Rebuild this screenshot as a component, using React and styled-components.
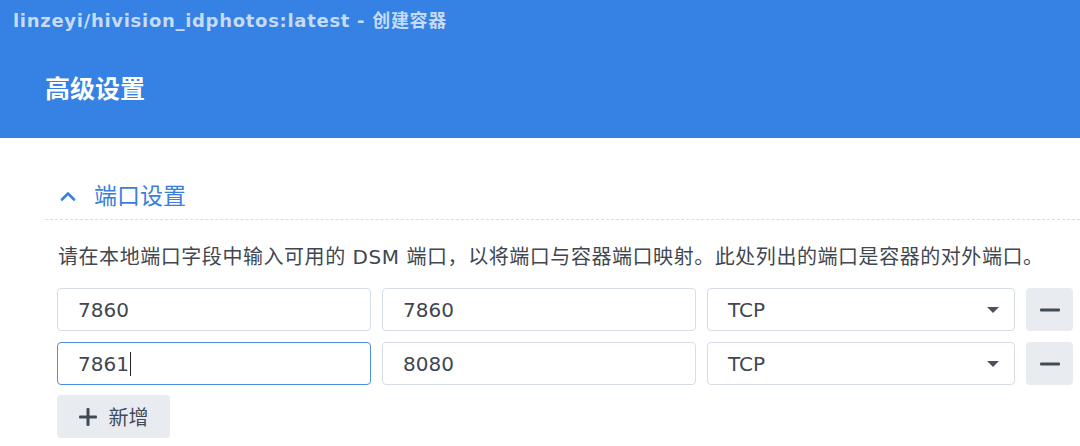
import React from 'react'
import styled, { createGlobalStyle } from 'styled-components'

const GlobalStyle = createGlobalStyle`
  body {
    margin: 0;
    background: #fff;
    font-family: "DejaVu Sans", "Noto Sans CJK SC", sans-serif;
  }
`

const Page = styled.div`
  width: 1080px;
  height: 446px;
  overflow: hidden;
  background: #fff;
`

const Header = styled.div`
  height: 138px;
  background: #3581e4;
  box-sizing: border-box;
  padding: 9px 0 0 13px;
`

const WindowTitle = styled.div`
  font-size: 18px;
  font-weight: 700;
  line-height: 24px;
  color: rgba(255, 255, 255, 0.72);
  letter-spacing: 0.7px;
`

const PageTitle = styled.h1`
  margin: 41px 0 0 32px;
  font-size: 25px;
  font-weight: 700;
  line-height: 32px;
  color: #fff;
`

const Content = styled.div`
  padding: 0 8px 0 45px;
`

const SectionHead = styled.div`
  display: flex;
  align-items: center;
  gap: 18px;
  height: 82px;
  box-sizing: border-box;
  padding: 35px 0 0 15px;
  margin-right: -8px;
  border-bottom: 1px dashed #d3deec;
  color: #3a7fe0;
  font-size: 23px;
  line-height: 30px;
`

const Body = styled.div`
  padding-left: 12px;
`

const Hint = styled.p`
  margin: 23px 0 0 1px;
  font-size: 20px;
  line-height: 28px;
  color: #3f4750;
  letter-spacing: 0.55px;
`

const Rows = styled.div`
  display: flex;
  flex-direction: column;
  gap: 11px;
  margin-top: 17px;
`

const Row = styled.div`
  display: grid;
  grid-template-columns: 314px 314px 308px 47px;
  column-gap: 11px;
  height: 43px;
`

const Field = styled.div`
  display: flex;
  align-items: center;
  box-sizing: border-box;
  padding: 0 20px;
  border: ${(p) => (p.$focused ? '1.5px solid #4a8ee6' : '1px solid #d6dde8')};
  border-radius: 4px;
  background: #fff;
  font-size: 20px;
  color: #3f4750;
`

const Caret = styled.span`
  display: inline-block;
  width: 1px;
  height: 24px;
  margin-left: 1px;
  background: #222;
`

const Select = styled(Field)`
  justify-content: space-between;
  padding-right: 15px;
`

const Arrow = styled.span`
  width: 0;
  height: 0;
  border-left: 6px solid transparent;
  border-right: 6px solid transparent;
  border-top: 6px solid #4a535d;
`

const IconButton = styled.button`
  display: flex;
  align-items: center;
  justify-content: center;
  gap: 12px;
  border: none;
  border-radius: 4px;
  background: #e8ecf1;
  color: #414b55;
  font-family: inherit;
  font-size: 20px;
  padding: 0;
`

const AddButton = styled(IconButton)`
  width: 113px;
  height: 43px;
  margin-top: 10px;
`

const ports = [
  { local: '7860', container: '7860' },
  { local: '7861', container: '8080', focused: true },
]

function Chevron() {
  return (
    <svg width="16" height="10" viewBox="0 0 16 10">
      <path d="M2 8.5 L8 2.5 L14 8.5" fill="none" stroke="#3a7fe0" strokeWidth="2.6" strokeLinecap="round" strokeLinejoin="round" />
    </svg>
  )
}

function Minus() {
  return (
    <svg width="20" height="4" viewBox="0 0 20 4">
      <rect x="0" y="0.5" width="20" height="3" rx="1" fill="#414b55" />
    </svg>
  )
}

function Plus() {
  return (
    <svg width="18" height="18" viewBox="0 0 18 18">
      <rect x="0" y="7.5" width="18" height="3" rx="1" fill="#414b55" />
      <rect x="7.5" y="0" width="3" height="18" rx="1" fill="#414b55" />
    </svg>
  )
}

export default function App() {
  return (
    <Page>
      <GlobalStyle />
      <Header>
        <WindowTitle>linzeyi/hivision_idphotos:latest - 创建容器</WindowTitle>
        <PageTitle>高级设置</PageTitle>
      </Header>
      <Content>
        <SectionHead>
          <Chevron />
          <span>端口设置</span>
        </SectionHead>
        <Body>
          <Hint>请在本地端口字段中输入可用的 DSM 端口，以将端口与容器端口映射。此处列出的端口是容器的对外端口。</Hint>
          <Rows>
            {ports.map((p) => (
              <Row key={p.local}>
                <Field $focused={p.focused}>
                  {p.local}
                  {p.focused && <Caret />}
                </Field>
                <Field>{p.container}</Field>
                <Select>
                  TCP
                  <Arrow />
                </Select>
                <IconButton>
                  <Minus />
                </IconButton>
              </Row>
            ))}
          </Rows>
          <AddButton>
            <Plus />
            新增
          </AddButton>
        </Body>
      </Content>
    </Page>
  )
}
